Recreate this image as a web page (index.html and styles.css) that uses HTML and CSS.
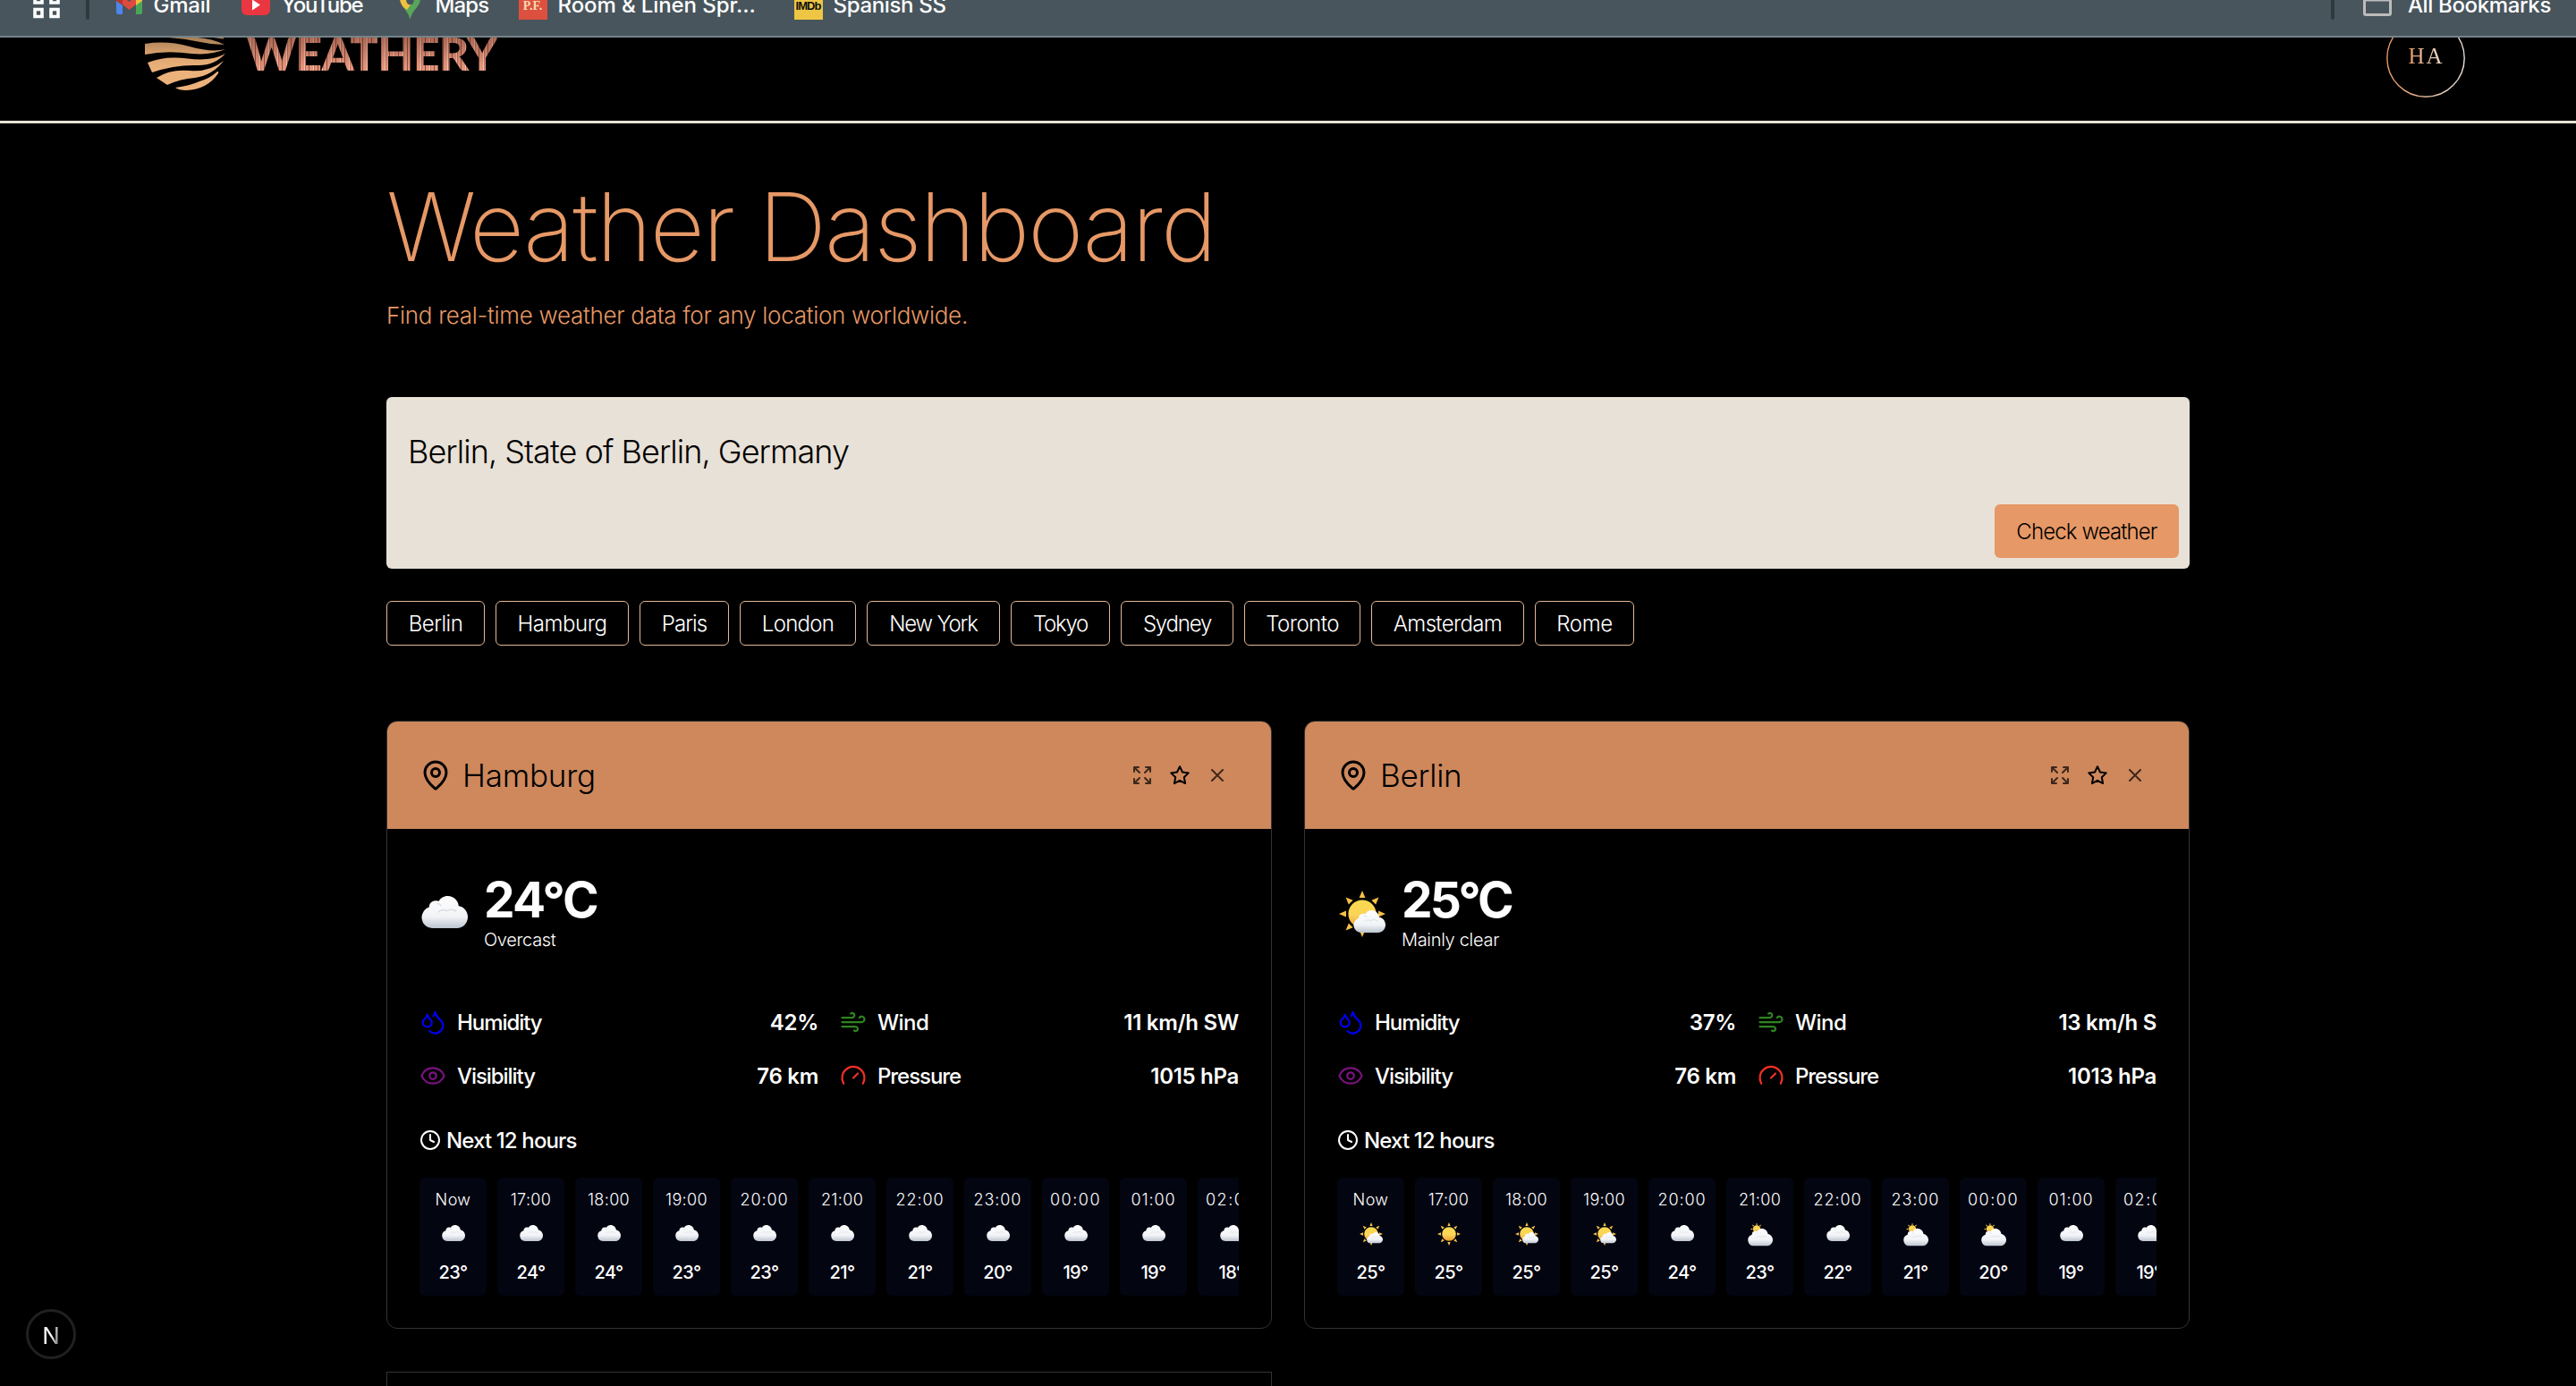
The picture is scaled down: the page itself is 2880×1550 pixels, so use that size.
FILE: index.html
```html
<!DOCTYPE html>
<html lang="en">
<head>
<meta charset="utf-8">
<title>Weathery</title>
<link rel="stylesheet" href="styles.css">
</head>
<body>
<svg class="defs" aria-hidden="true">
  <defs>
    <linearGradient id="cloudFill" x1="0" y1="0" x2="0" y2="1"><stop offset="0" stop-color="#fff"/><stop offset=".65" stop-color="#f1f3f6"/><stop offset="1" stop-color="#bcc5d0"/></linearGradient>
    <linearGradient id="sunFill" x1="0" y1="0" x2="0" y2="1"><stop offset="0" stop-color="#f9d84c"/><stop offset=".55" stop-color="#fbd45a"/><stop offset="1" stop-color="#ef9c2c"/></linearGradient>
    <linearGradient id="logoFill" gradientUnits="userSpaceOnUse" x1="0" y1="0" x2="0" y2="60"><stop offset="0" stop-color="#a87f55"/><stop offset=".35" stop-color="#e0a671"/><stop offset=".6" stop-color="#ecb27c"/></linearGradient>
    <linearGradient id="ringStroke" x1="0" y1="0" x2="1" y2="0"><stop offset="0" stop-color="#e69866"/><stop offset="1" stop-color="#e8e0d8"/></linearGradient>
    <symbol id="cloudShape" viewBox="0 0 26 18"><path fill="url(#cloudFill)" d="M6 18a6 6 0 0 1-1.6-11.7C4.300 4.200 6 2.500 8.300 2.600c.6 0 1 .1 1.500.3C10.800 1.100 12.600 0 14.700 0c3.200 0 5.900 2.400 6.200 5.600C23.800 6 26 8.600 26 11.700 26 15.200 23.200 18 20 18z"/><path d="M9.500 9.200c1.200-1.600 3.200-1.800 4.600-.8 1.700-1.200 4-.9 5.500.2M8.500 4.500c1.300-.4 2.200.2 2.700 1" fill="none" stroke="#d3d9e1" stroke-width=".6"/></symbol>
    <symbol id="sunShape" viewBox="0 0 26 26"><path fill="#f8c146" d="M13 0l1.700 4h-3.400zM13 26l1.700-4h-3.400zM0 13l4-1.700v3.400zM26 13l-4-1.700v3.400zM3.800 3.800l4 1.600-2.400 2.400zM22.200 3.800l-4 1.600 2.400 2.400zM3.800 22.200l4-1.600-2.400-2.400zM22.200 22.200l-4-1.600 2.400-2.400z"/><circle cx="13" cy="13" r="7.800" fill="url(#sunFill)"/></symbol>
    <symbol id="cloud" viewBox="0 0 28 28"><use href="#cloudShape" x="1" y="4" width="26" height="18"/></symbol>
    <symbol id="sun" viewBox="0 0 28 28"><use href="#sunShape" x="1" y="1" width="26" height="26"/></symbol>
    <symbol id="partly" viewBox="0 0 28 28"><use href="#sunShape" x="1" y="1" width="26" height="26"/><use href="#cloudShape" x="9" y="12" width="18" height="12.500"/></symbol>
    <symbol id="mostly" viewBox="0 0 28 28"><use href="#sunShape" x="3" y="1.500" width="14" height="14"/><use href="#cloudShape" x="0" y="8" width="28" height="19.400"/></symbol>
    <symbol id="pin" viewBox="0 0 24 24"><path d="M20 10c0 4.993-5.539 10.193-7.399 11.799a1 1 0 0 1-1.202 0C9.539 20.193 4 14.993 4 10a8 8 0 0 1 16 0"/><circle cx="12" cy="10" r="3"/></symbol>
    <symbol id="expand" viewBox="0 0 24 24"><path d="M15 9l6-6M15 15l6 6M9 9L3 3M9 15l-6 6M21 16v5h-5M21 8V3h-5M3 16v5h5M3 8V3h5"/></symbol>
    <symbol id="star" viewBox="0 0 24 24"><path d="M12 2.200l3 6.300 6.800.9-5 4.800 1.300 6.900L12 17.800l-6.100 3.300 1.300-6.900-5-4.800 6.800-.9z"/></symbol>
    <symbol id="close" viewBox="0 0 24 24"><path d="M18 6l-12 12M6 6l12 12"/></symbol>
    <symbol id="drops" viewBox="0 0 24 24"><path d="M7 16.300c2.200 0 4-1.830 4-4.050 0-1.160-.57-2.260-1.710-3.190S7.290 6.750 7 5.300c-.29 1.450-1.140 2.840-2.290 3.760S3 11.100 3 12.250c0 2.220 1.800 4.050 4 4.050z"/><path d="M12.560 6.600A10.970 10.970 0 0 0 14 3.020c.5 2.500 2 4.900 4 6.500s3 3.500 3 5.500a6.980 6.980 0 0 1-11.910 4.970"/></symbol>
    <symbol id="wind" viewBox="0 0 24 24"><path d="M12.800 19.600A2 2 0 1 0 14 16H2M17.500 8a2.500 2.500 0 1 1 2 4H2M9.800 4.400A2 2 0 1 1 11 8H2"/></symbol>
    <symbol id="eye" viewBox="0 0 24 24"><path d="M2.062 12.348a1 1 0 0 1 0-.696 10.750 10.750 0 0 1 19.876 0 1 1 0 0 1 0 .696 10.750 10.750 0 0 1-19.876 0"/><circle cx="12" cy="12" r="3"/></symbol>
    <symbol id="gauge" viewBox="0 0 24 24"><path d="M12 14l4-4M3.340 19a10 10 0 1 1 17.320 0"/></symbol>
    <symbol id="clock" viewBox="0 0 24 24"><circle cx="12" cy="12" r="10"/><path d="M12 6v6l4 2"/></symbol>
  </defs>
</svg>

<nav class="bookmarks">
  <svg class="bm-apps" width="30" height="32" viewBox="0 0 30 32"><path d="M2 5h8v8H2zM20 5h8v8h-8zM2 20.500h8v8H2zM20 20.500h8v8h-8z" fill="none" stroke="#fff" stroke-width="3.600"/></svg>
  <i class="bm-rule"></i>
  <a class="bm gmail"><svg width="29" height="32" viewBox="0 0 29 32"><path fill="#4d86ec" d="M0 13l7 5v12H2a2 2 0 0 1-2-2z"/><path fill="#4aa657" d="M29 13l-7 5v12h5a2 2 0 0 0 2-2z"/><path fill="#dd4b3e" d="M7 10l7.500 6L22 10v9l-7.500 6L7 19z"/><path fill="#b8342b" d="M0 12q2-4 7-1v9l-7-5z"/><path fill="#f3bd42" d="M29 12q-2-4-7-1v9l7-5z"/></svg><span>Gmail</span></a>
  <a class="bm youtube"><svg width="32" height="32" viewBox="0 0 32 32"><rect y="7" width="32" height="24" rx="6" fill="#ea3640"/><path fill="#fff" d="M12 13.500l9 6-9 6z"/></svg><span>YouTube</span></a>
  <a class="bm maps"><svg width="23" height="35" viewBox="0 0 23 35"><path fill="#57a65a" d="M23 11c0 10-9 12-11.500 24C10 28 6 24 3 20L20 5z"/><path fill="#f0c13f" d="M3.500 20.500C1 17 0 14 0 11l8-2 5 8-5 7z"/><path fill="#4d86ec" d="M0 11Q0 0 11.500 0 20 0 22.500 8L9 14z"/><circle cx="11.500" cy="14" r="4.200" fill="#48555d"/></svg><span>Maps</span></a>
  <a class="bm room"><b class="fav fav-pf">P.F.</b><span>Room &amp; Linen Spr...</span></a>
  <a class="bm spanish"><b class="fav fav-imdb">IMDb</b><span>Spanish SS</span></a>
  <div class="bm-right">
    <i class="bm-rule"></i>
    <svg class="bm-folder" width="32" height="30" viewBox="0 0 32 30"><path d="M1.500 12h29v15a1.500 1.500 0 0 1-1.500 1.500H3A1.500 1.500 0 0 1 1.500 27V5H13l3 7" fill="none" stroke="#bdbcbb" stroke-width="3"/></svg>
    <span class="all">All Bookmarks</span>
  </div>
</nav>

<header class="site-header">
  <svg class="logo" width="90" height="60" viewBox="0 0 90 60"><g fill="url(#logoFill)"><path d="M26 0h33q16 1 30 8Q75 8 62 5 44 1 26 0zM76 0h12v1.500zM0 7Q25 3 50 10t40 3q-16 7-38 5Q24 14 0 19z"/><path d="M3 28Q22 20 48 23.500T90 18Q78 31 60 31 34 30 8 39z"/><path d="M13 45Q28 35 50 37t38-11Q76 42 56 45 40 46 25 53z"/><path d="M34 56Q50 54 61 49 72 46 81 38q2-.5 1 2-12 18-36 19-8 0-12-3z"/></g></svg>
  <span class="wordmark">WEATHERY</span>
  <div class="avatar"><svg width="88" height="88" viewBox="0 0 88 88"><circle cx="44" cy="44" r="43.200" fill="none" stroke="url(#ringStroke)" stroke-width="1.400"/></svg><span>HA</span></div>
</header>

<main class="page">
  <h1>Weather Dashboard</h1>
  <p class="lead">Find real-time weather data for any location worldwide.</p>

  <section class="search">
    <div class="query">Berlin, State of Berlin, Germany</div>
    <button class="check">Check weather</button>
  </section>

  <div class="chips">
    <span class="chip c1">Berlin</span><span class="chip c2">Hamburg</span><span class="chip c3">Paris</span><span class="chip c4">London</span><span class="chip c5">New York</span><span class="chip c6">Tokyo</span><span class="chip c7">Sydney</span><span class="chip c8">Toronto</span><span class="chip c9">Amsterdam</span><span class="chip c10">Rome</span>
  </div>

  <section class="cards">
    <article class="card">
      <header class="card-head"><svg class="icon pin"><use href="#pin"/></svg><h2>Hamburg</h2><div class="actions"><svg class="icon dim"><use href="#expand"/></svg><svg class="icon"><use href="#star"/></svg><svg class="icon dim close"><use href="#close"/></svg></div></header>
      <div class="card-body">
        <div class="now"><svg class="now-icon"><use href="#cloud"/></svg><div><div class="temp">24°C</div><div class="cond">Overcast</div></div></div>
        <div class="stats">
          <div class="stat"><svg class="icon blue"><use href="#drops"/></svg><span>Humidity</span><b>42%</b></div>
          <div class="stat"><svg class="icon green"><use href="#wind"/></svg><span class="wind-label">Wind</span><b>11 km/h SW</b></div>
          <div class="stat"><svg class="icon purple"><use href="#eye"/></svg><span>Visibility</span><b>76 km</b></div>
          <div class="stat"><svg class="icon red"><use href="#gauge"/></svg><span>Pressure</span><b>1015 hPa</b></div>
        </div>
        <div class="next"><svg class="icon"><use href="#clock"/></svg><span>Next 12 hours</span></div>
        <div class="hours">
          <div class="hour"><span>Now</span><svg><use href="#cloud"/></svg><b>23°</b></div>
          <div class="hour"><span>17:00</span><svg><use href="#cloud"/></svg><b>24°</b></div>
          <div class="hour"><span>18:00</span><svg><use href="#cloud"/></svg><b>24°</b></div>
          <div class="hour"><span>19:00</span><svg><use href="#cloud"/></svg><b>23°</b></div>
          <div class="hour"><span class="wide">20:00</span><svg><use href="#cloud"/></svg><b>23°</b></div>
          <div class="hour"><span>21:00</span><svg><use href="#cloud"/></svg><b>21°</b></div>
          <div class="hour"><span class="wide">22:00</span><svg><use href="#cloud"/></svg><b>21°</b></div>
          <div class="hour"><span class="wide">23:00</span><svg><use href="#cloud"/></svg><b>20°</b></div>
          <div class="hour"><span class="widest">00:00</span><svg><use href="#cloud"/></svg><b>19°</b></div>
          <div class="hour"><span class="wide">01:00</span><svg><use href="#cloud"/></svg><b>19°</b></div>
          <div class="hour"><span class="widest">02:00</span><svg><use href="#cloud"/></svg><b>18°</b></div>
        </div>
      </div>
    </article>
    <article class="card">
      <header class="card-head"><svg class="icon pin"><use href="#pin"/></svg><h2>Berlin</h2><div class="actions"><svg class="icon dim"><use href="#expand"/></svg><svg class="icon"><use href="#star"/></svg><svg class="icon dim close"><use href="#close"/></svg></div></header>
      <div class="card-body">
        <div class="now"><svg class="now-icon"><use href="#partly"/></svg><div><div class="temp tight">25°C</div><div class="cond">Mainly clear</div></div></div>
        <div class="stats">
          <div class="stat"><svg class="icon blue"><use href="#drops"/></svg><span>Humidity</span><b>37%</b></div>
          <div class="stat"><svg class="icon green"><use href="#wind"/></svg><span class="wind-label">Wind</span><b>13 km/h S</b></div>
          <div class="stat"><svg class="icon purple"><use href="#eye"/></svg><span>Visibility</span><b>76 km</b></div>
          <div class="stat"><svg class="icon red"><use href="#gauge"/></svg><span>Pressure</span><b>1013 hPa</b></div>
        </div>
        <div class="next"><svg class="icon"><use href="#clock"/></svg><span>Next 12 hours</span></div>
        <div class="hours">
          <div class="hour"><span>Now</span><svg><use href="#partly"/></svg><b>25°</b></div>
          <div class="hour"><span>17:00</span><svg><use href="#sun"/></svg><b>25°</b></div>
          <div class="hour"><span>18:00</span><svg><use href="#partly"/></svg><b>25°</b></div>
          <div class="hour"><span>19:00</span><svg><use href="#partly"/></svg><b>25°</b></div>
          <div class="hour"><span class="wide">20:00</span><svg><use href="#cloud"/></svg><b>24°</b></div>
          <div class="hour"><span>21:00</span><svg><use href="#mostly"/></svg><b>23°</b></div>
          <div class="hour"><span class="wide">22:00</span><svg><use href="#cloud"/></svg><b>22°</b></div>
          <div class="hour"><span class="wide">23:00</span><svg><use href="#mostly"/></svg><b>21°</b></div>
          <div class="hour"><span class="widest">00:00</span><svg><use href="#mostly"/></svg><b>20°</b></div>
          <div class="hour"><span class="wide">01:00</span><svg><use href="#cloud"/></svg><b>19°</b></div>
          <div class="hour"><span class="widest">02:00</span><svg><use href="#cloud"/></svg><b>19°</b></div>
        </div>
      </div>
    </article>
    <article class="card upcoming"></article>
  </section>
</main>
<div class="dev-badge"><span>N</span></div>
</body>
</html>
```
FILE: styles.css
```css
* { box-sizing: border-box; }
html { overflow: hidden; background: #000; }
body { margin: 0; width: 2880px; height: 1550px; overflow: hidden; position: relative; background: #000; color: #fff; font-family: Inter, "Liberation Sans", sans-serif; }
h1, h2, p { margin: 0; font-weight: inherit; }
svg { display: block; flex: none; }
.defs { position: absolute; width: 0; height: 0; }

/* Browser bookmarks strip */
.bookmarks { position: relative; z-index: 2; display: flex; align-items: flex-start; height: 42px; background: #48555d; border-bottom: 2px solid #75838a; font-size: 24px; font-weight: 500; line-height: 30px; overflow: hidden; padding-left: 37px; }
.bookmarks > *, .bm > * { margin-top: -10px; }
.bookmarks > .bm, .bookmarks > .bm-right { margin-top: 0; }
.bm { display: flex; }
.bm-rule { width: 3.500px; height: 32px; border-radius: 2px; background: #30393e; margin-left: 29px; }
.bm span { margin-top: -9px; white-space: nowrap; }
.gmail { margin-left: 30px; width: 140px; letter-spacing: -.01em; }
.gmail svg { margin-top: -14px; margin-right: 13px; }
.youtube { width: 177px; letter-spacing: -.052em; }
.youtube svg { margin-top: -14px; margin-right: 13px; }
.maps { width: 133px; letter-spacing: -.038em; }
.maps svg { margin-top: -13px; margin-right: 17px; }
.room { width: 308px; letter-spacing: -.004em; }
.spanish { letter-spacing: -.014em; }
.fav { width: 32px; height: 32px; margin-right: 12px; text-align: center; overflow: hidden; line-height: 36px; letter-spacing: 0; }
.fav-pf { background: #dd5040; color: #f6dcae; font: 700 14px/34px "Liberation Serif", serif; }
.fav-imdb { background: #eec643; color: #111; font: 700 13px/34px "Liberation Sans", sans-serif; letter-spacing: -1px; }
.bm-right { display: flex; margin-left: auto; padding-right: 28px; }
.bm-right > * { margin-top: -10px; }
.bm-folder { margin: -12px 18px 0 32px; }
.bm-right .all { margin-top: -9px; letter-spacing: -.0146em; }

/* Site header */
.site-header { display: flex; align-items: flex-start; height: 96px; border-bottom: 3px solid #e8e1d7; padding: 0 124px 0 162px; }
.wordmark { margin: -13px 0 0 24px; font: 900 52px/60px Lato, sans-serif; letter-spacing: -.0138em; color: transparent; -webkit-background-clip: text; background-clip: text; background-image: linear-gradient(180deg, rgba(60,20,10,.35) 20%, transparent 75%), repeating-linear-gradient(90deg, #e3937a 0 4px, #f3c3b0 4px 5px, #b9705a 5px 6px, #e3937a 6px 9px, #8a4f40 9px 10px); }
.avatar { width: 88px; height: 88px; margin: -21px 0 0 auto; display: grid; place-items: center; }
.avatar > * { grid-area: 1 / 1; }
.avatar span { font: 500 25px/30px "Liberation Serif", serif; letter-spacing: 2px; padding-left: 1px; margin-top: -4px; color: transparent; background: linear-gradient(90deg, #e69866, #e8e0d8); -webkit-background-clip: text; background-clip: text; }

/* Page intro and search */
.page { width: 2016px; margin: 0 auto; padding-top: 56px; }
h1 { font-size: 106px; line-height: 120px; font-weight: 200; letter-spacing: -.0188em; color: #e69866; white-space: nowrap; }
.lead { padding-top: 1px; margin-top: 20px; height: 36px; font-size: 26px; line-height: 36px; font-weight: 300; letter-spacing: -.0112em; color: #e69866; }
.search { display: flex; flex-direction: column; justify-content: space-between; height: 192px; margin-top: 74px; padding: 37px 12px 12px 24px; border-radius: 6px; background: #e8e1d7; color: #000; }
.query { font-size: 36px; line-height: 49px; font-weight: 300; letter-spacing: -.0262em; }
.check { align-self: flex-end; width: 206px; height: 60px; padding: 2px 0 0; border: 0; border-radius: 6px; background: #e69866; color: #000; font: 300 24px/58px Inter, sans-serif; letter-spacing: -.0365em; }
.chips { display: flex; gap: 12px; margin-top: 36px; }
.chip { height: 50px; border: 1px solid #e3b898; border-radius: 6px; text-align: center; font-size: 24px; line-height: 50px; font-weight: 300; }
.c1 { width: 110px; letter-spacing: -.021em; }
.c2 { width: 149px; letter-spacing: -.019em; }
.c3 { width: 100px; letter-spacing: -.038em; }
.c4 { width: 130px; letter-spacing: -.03em; }
.c5 { width: 149px; letter-spacing: -.049em; }
.c6 { width: 111px; letter-spacing: -.053em; }
.c7 { width: 126px; letter-spacing: -.05em; }
.c8 { width: 130px; letter-spacing: -.022em; }
.c9 { width: 171px; letter-spacing: -.027em; }
.c10 { width: 111px; letter-spacing: -.015em; }

/* Weather cards */
.cards { display: grid; grid-template-columns: 1fr 1fr; column-gap: 36px; row-gap: 48px; margin-top: 84px; }
.card { height: 680px; border: 1px solid #333; border-radius: 12px; overflow: hidden; min-width: 0; }
.upcoming { height: 16px; border-radius: 0; border-bottom: 0; }
.icon { width: 24px; height: 24px; fill: none; stroke: currentColor; stroke-width: 2; stroke-linecap: round; stroke-linejoin: round; }
.card-head { display: flex; align-items: center; height: 120px; padding: 0 48px 0 36px; background: #ce885c; color: #000; }
.icon.pin { width: 36px; height: 36px; }
h2 { margin-left: 12px; font-size: 35px; line-height: 48px; font-weight: 300; letter-spacing: -.007em; }
.actions { display: flex; gap: 18px; margin-left: auto; }
.dim { opacity: .7; }
.card-body { padding: 49px 36px 36px; }
.now { display: flex; gap: 16px; height: 89px; }
.now-icon { width: 56px; height: 56px; margin-top: 18px; }
.temp { font-size: 55px; line-height: 61px; font-weight: 700; letter-spacing: -.0326em; }
.temp.tight { letter-spacing: -.0535em; }
.cond { font-size: 20px; line-height: 29px; font-weight: 300; letter-spacing: -.0155em; }
.stats { display: grid; grid-template-columns: 1fr 1fr; gap: 24px; margin-top: 60px; }
.stat { display: flex; align-items: center; height: 36px; font-size: 24px; line-height: 34px; font-weight: 500; white-space: nowrap; }
.stat .icon { width: 30px; height: 30px; margin-right: 12px; stroke-width: 1.800; }
.stat span { padding-top: 2px; letter-spacing: -.044em; }
.stat .wind-label { letter-spacing: -.0216em; }
.stat b { padding-top: 2px; margin-left: auto; font-weight: 600; letter-spacing: -.012em; }
.blue { color: #0000f0; } .green { color: #2f8420; } .purple { color: #7a1280; } .red { color: #ee3024; }
.next { display: flex; align-items: center; gap: 6px; height: 36px; margin-top: 36px; font-size: 24px; font-weight: 500; letter-spacing: -.0361em; }
.hours { display: flex; gap: 12px; margin-top: 24px; overflow: hidden; }
.hour { display: flex; flex: none; flex-direction: column; align-items: center; width: 75px; height: 132px; padding-top: 13px; border-radius: 6px; background: #030511; }
.hour span { font-size: 18px; line-height: 24px; font-weight: 300; letter-spacing: .02em; }
.hour .wide { letter-spacing: .05em; }
.hour .widest { letter-spacing: .085em; }
.hour svg { width: 28px; height: 28px; margin: 12px 0 15px; }
.hour b { font-size: 20px; line-height: 28px; font-weight: 500; letter-spacing: -.03em; }

.dev-badge { position: absolute; left: 29px; top: 1464px; width: 56px; height: 56px; display: grid; place-items: center; border: 3px solid #202020; border-radius: 50%; background: #000; font-size: 26px; line-height: 30px; }
.dev-badge span { margin-top: 3px; color: transparent; background: linear-gradient(100deg, #fff 50%, #555 100%); -webkit-background-clip: text; background-clip: text; }
```
